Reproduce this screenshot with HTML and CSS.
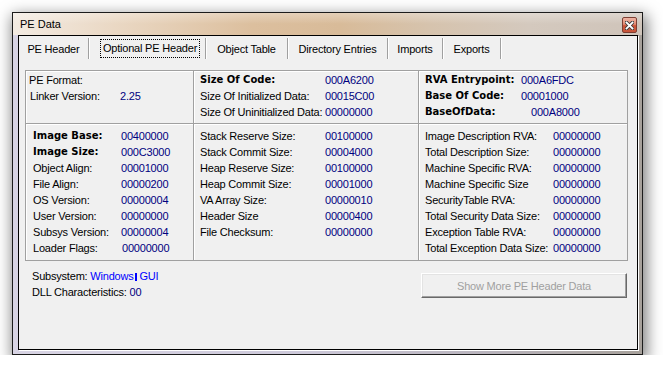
FILE: index.html
```html
<!DOCTYPE html>
<html>
<head>
<meta charset="utf-8">
<title>PE Data</title>
<link rel="stylesheet" href="styles.css">
</head>
<body>
<div class="window">
  <div class="titlebar">
    <span class="title">PE Data</span>
    <span class="close">
      <svg width="9" height="9" viewBox="0 0 9 9">
        <path d="M1.5 1.5 L7.5 7.5 M7.5 1.5 L1.5 7.5" stroke="#3a3a3a" stroke-width="3.6" stroke-linecap="square"/>
        <path d="M1.5 1.5 L7.5 7.5 M7.5 1.5 L1.5 7.5" stroke="#ffffff" stroke-width="1.8" stroke-linecap="square"/>
      </svg>
    </span>
  </div>
  <div class="client">
    <div class="tabs">
      <div class="tab">PE Header</div>
      <div class="tab"><span class="focus">Optional PE Header</span></div>
      <div class="tab">Object Table</div>
      <div class="tab">Directory Entries</div>
      <div class="tab">Imports</div>
      <div class="tab">Exports</div>
    </div>

    <div class="grid">
      <div class="cell top c-left">
        <span class="lbl">PE Format:</span><span class="val"></span>
        <span class="lbl ind">Linker Version:</span><span class="val">2.25</span>
      </div>
      <div class="cell top c-mid">
        <span class="lbl bold">Size Of Code:</span><span class="val">000A6200</span>
        <span class="lbl">Size Of Initialized Data:</span><span class="val">00015C00</span>
        <span class="lbl">Size Of Uninitialized Data:</span><span class="val">00000000</span>
      </div>
      <div class="cell top c-right">
        <span class="lbl bold">RVA Entrypoint:</span><span class="val">000A6FDC</span>
        <span class="lbl bold">Base Of Code:</span><span class="val">00001000</span>
        <span class="lbl bold">BaseOfData:</span><span class="val shift">000A8000</span>
      </div>

      <div class="cell bottom b-left">
        <span class="lbl bold">Image Base:</span><span class="val">00400000</span>
        <span class="lbl bold">Image Size:</span><span class="val">000C3000</span>
        <span class="lbl">Object Align:</span><span class="val">00001000</span>
        <span class="lbl">File Align:</span><span class="val">00000200</span>
        <span class="lbl">OS Version:</span><span class="val">00000004</span>
        <span class="lbl">User Version:</span><span class="val">00000000</span>
        <span class="lbl">Subsys Version:</span><span class="val">00000004</span>
        <span class="lbl">Loader Flags:</span><span class="val nudge">00000000</span>
      </div>
      <div class="cell bottom b-mid">
        <span class="lbl">Stack Reserve Size:</span><span class="val">00100000</span>
        <span class="lbl">Stack Commit Size:</span><span class="val">00004000</span>
        <span class="lbl">Heap Reserve Size:</span><span class="val">00100000</span>
        <span class="lbl">Heap Commit Size:</span><span class="val">00001000</span>
        <span class="lbl">VA Array Size:</span><span class="val">00000010</span>
        <span class="lbl">Header Size</span><span class="val">00000400</span>
        <span class="lbl">File Checksum:</span><span class="val">00000000</span>
      </div>
      <div class="cell bottom b-right">
        <span class="lbl">Image Description RVA:</span><span class="val">00000000</span>
        <span class="lbl">Total Description Size:</span><span class="val">00000000</span>
        <span class="lbl">Machine Specific RVA:</span><span class="val">00000000</span>
        <span class="lbl">Machine Specific Size</span><span class="val">00000000</span>
        <span class="lbl">SecurityTable RVA:</span><span class="val">00000000</span>
        <span class="lbl">Total Security Data Size:</span><span class="val">00000000</span>
        <span class="lbl">Exception Table RVA:</span><span class="val">00000000</span>
        <span class="lbl">Total Exception Data Size:</span><span class="val">00000000</span>
      </div>
    </div>

    <div class="footer">
      <div class="info">
        <div class="line">Subsystem: <span class="link">Windows<span class="caret"></span> GUI</span></div>
        <div class="line">DLL Characteristics: <span class="navy">00</span></div>
      </div>
      <button class="more" disabled>Show More PE Header Data</button>
    </div>
  </div>
</div>
</body>
</html>
```

FILE: styles.css
```css
html, body {
  margin: 0;
  padding: 0;
  background: #ffffff;
}

body {
  font-family: "Liberation Sans", Arial, sans-serif;
  font-size: 11px;
  letter-spacing: -0.2px;
  color: #000;
}

.window {
  margin: 12px 0 0 12px;
  width: 631px;
  height: 343px;
  box-sizing: border-box;
  border: 1px solid #1c1c1c;
  background: linear-gradient(to right, #d8d4e4 0%, #cdc9da 45%, #b9b4bd 75%, #a7a19b 100%);
  box-shadow: 2px 5px 14px 2px rgba(0, 0, 0, 0.5);
  display: flex;
  flex-direction: column;
}

.titlebar {
  height: 22px;
  flex: none;
  display: flex;
  align-items: center;
  justify-content: space-between;
  padding: 0 5px 0 7px;
  background:
    linear-gradient(to bottom, rgba(255,255,255,0.3), rgba(255,255,255,0) 50%),
    linear-gradient(to right, #f3ebe2 0%, #ead8c4 16%, #dcbf9e 38%, #d8bb99 52%, #d6c3ad 66%, #d4c9be 82%, #cfc4ba 100%);
}

.title {
  font-size: 11px;
  letter-spacing: 0;
  color: #000;
  margin-top: -1px;
}

.close {
  width: 13px;
  height: 14px;
  border: 1px solid #7d3f33;
  border-radius: 2px;
  background: linear-gradient(to bottom, #efb4a4 0%, #e08a73 45%, #cc5236 55%, #c9573c 100%);
  display: flex;
  align-items: center;
  justify-content: center;
  margin-top: 2px;
}

.client {
  flex: 1;
  margin: 0 4px 4px 5px;
  border: 1px solid #000;
  background: #f0f0f0;
  box-shadow: 1px 1px 0 #ffffff;
  display: flex;
  flex-direction: column;
}

/* tabs */
.tabs {
  display: grid;
  grid-template-columns: 70px 117px 82px 100px 55px 58px;
  height: 21px;
  margin-top: 2px;
}

.tab {
  display: flex;
  align-items: center;
  justify-content: center;
  border-right: 1px solid #a0a0a0;
  box-shadow: 1px 0 0 #ffffff;
}

.focus {
  border: 1px dotted #000;
  padding: 2px 2px 3px 2px;
  margin-left: 6px;
}

/* data grid */
.grid {
  margin: 11px 9px 0 6px;
  display: grid;
  grid-template-columns: 168px 225px 209px;
  grid-template-rows: 53px 137px;
  border-top: 1px solid #a0a0a0;
  border-left: 1px solid #a0a0a0;
}

.cell {
  border-right: 1px solid #a0a0a0;
  border-bottom: 1px solid #a0a0a0;
  box-shadow: inset 1px 1px 0 #ffffff;
  display: grid;
  align-content: start;
  line-height: 16px;
}

.top { padding-top: 1px; }
.bottom { padding-top: 4px; }

.c-left { grid-template-columns: 91px auto; padding-left: 3px; }
.c-mid { grid-template-columns: 125px auto; padding-left: 6px; }
.c-right { grid-template-columns: 96px auto; padding-left: 6px; }
.b-left { grid-template-columns: 88px auto; padding-left: 7px; }
.b-mid { grid-template-columns: 125px auto; padding-left: 6px; }
.b-right { grid-template-columns: 128px auto; padding-left: 6px; }

.lbl { white-space: nowrap; }
.ind { padding-left: 1px; }

.bold {
  font-family: "DejaVu Sans", Verdana, sans-serif;
  font-weight: bold;
  font-size: 10px;
  letter-spacing: 0;
}

.val { color: #000080; white-space: nowrap; }
.shift { padding-left: 10px; }
.nudge { padding-left: 1px; }

/* footer */
.footer {
  display: flex;
  justify-content: space-between;
  align-items: flex-start;
  margin: 0 10px 0 13px;
}

.info {
  padding-top: 7px;
  line-height: 16px;
}

.link { color: #0000ff; }

.caret {
  display: inline-block;
  width: 2px;
  height: 8px;
  background: #0000ff;
  margin-left: 1px;
  vertical-align: -1px;
}

.navy { color: #000080; }

.more {
  margin-top: 12px;
  width: 206px;
  height: 25px;
  font-family: "Liberation Sans", Arial, sans-serif;
  font-size: 11px;
  letter-spacing: -0.2px;
  color: #a0a0a0;
  background: #f0f0f0;
  border: 1px solid;
  border-color: #ffffff #696969 #696969 #ffffff;
  box-shadow: inset -1px -1px 0 #a0a0a0, inset 1px 1px 0 #e3e3e3;
  padding: 0;
}
```
